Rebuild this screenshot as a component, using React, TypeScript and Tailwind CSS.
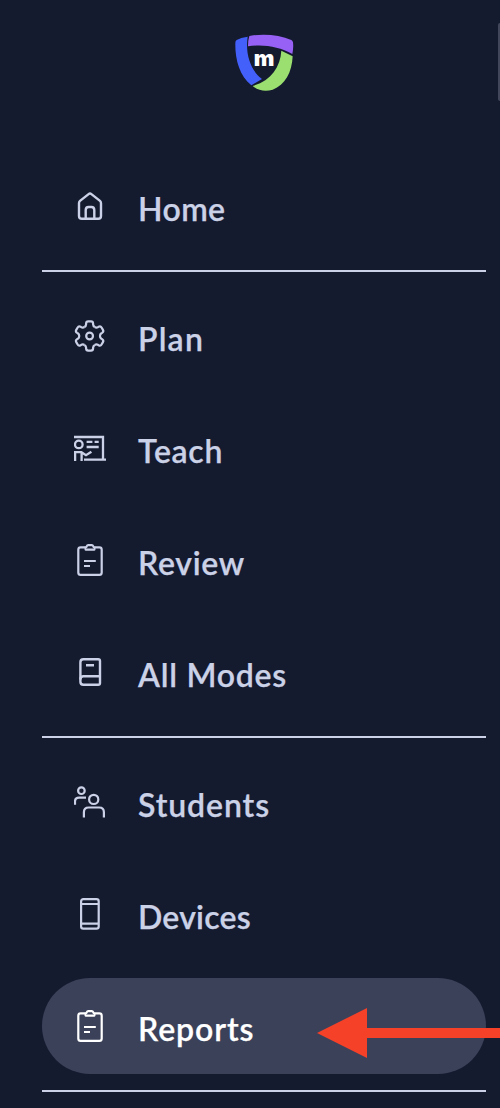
import React from 'react';
import clsx from 'clsx';

interface NavItem {
  label: string;
  icon: React.ReactNode;
  textClass?: string;
  active?: boolean;
}

function Icon({ children }: { children: React.ReactNode }) {
  return (
    <svg
      viewBox="0 0 32 32"
      className="w-8 h-8 shrink-0"
      fill="none"
      stroke="currentColor"
      strokeWidth="2.2"
      strokeLinejoin="round"
    >
      {children}
    </svg>
  );
}

function HomeIcon() {
  return (
    <Icon>
      <path d="M5 13.2Q5 11.8 6 10.9L14.6 4.1Q16 3 17.4 4.1L26 10.9Q27 11.8 27 13.2V25.9Q27 28.7 24.2 28.7H7.8Q5 28.7 5 25.9Z" strokeWidth="2.4" />
      <path d="M11.7 28.5V20.2Q11.7 17 14.6 17H17.4Q20.3 17 20.3 20.2V28.5" strokeWidth="2.4" />
    </Icon>
  );
}

const GEAR_TOOTH = 'M-5.2 -9Q-3.6 -9.8 -3.5 -11.6V-12.4Q-3.4 -14.6 -1.4 -14.6H1.4Q3.4 -14.6 3.5 -12.4V-11.6Q3.6 -9.8 5.2 -9';

function GearIcon() {
  return (
    <Icon>
      <g transform="translate(15.6 16)">
        {[0, 60, 120, 180, 240, 300].map((angle) => (
          <path key={angle} d={GEAR_TOOTH} transform={`rotate(${angle})`} />
        ))}
        <circle r="3.4" />
      </g>
    </Icon>
  );
}

function TeachIcon() {
  return (
    <Icon>
      <g strokeWidth="2.3" strokeLinejoin="miter">
        <path d="M0 5H29V27.6M10 27.6H32" />
        <circle cx="4.8" cy="12.4" r="3.8" />
        <path d="M12.6 9.8H18.4M20.6 9.8H24.7M12.6 15H24.7" />
        <path d="M1.1 29V20.2H7.4L12 23.2L17.4 19.8M7.6 29V21" />
      </g>
    </Icon>
  );
}

function ClipboardIcon() {
  return (
    <Icon>
      <path d="M11.5 3.4H6.6Q4.3 3.4 4.3 5.7V28.4Q4.3 30.8 6.6 30.8H25.4Q27.7 30.8 27.7 28.4V5.7Q27.7 3.4 25.4 3.4H20.5" />
      <path d="M11.6 5.6V3.4Q12.6 3.2 12.9 2Q13.2 1.1 14.2 1.1H17.8Q18.8 1.1 19.1 2Q19.4 3.2 20.4 3.4V5.6Z" />
      <path d="M10 17H21.8M10 22H16" />
    </Icon>
  );
}

function BookIcon() {
  return (
    <Icon>
      <path d="M9.4 3.3H24.2Q26 3.3 26 5.1V26.9Q26 28.7 24.2 28.7H9.4Q6.4 28.7 6.4 25.7V6.3Q6.4 3.3 9.4 3.3Z" strokeWidth="2.4" />
      <path d="M6.4 23.4Q6.4 20.2 9.4 20.2H26M12 9.2H20" strokeWidth="2.4" />
    </Icon>
  );
}

function StudentsIcon() {
  return (
    <Icon>
      <circle cx="7.4" cy="4.7" r="3.3" />
      <path d="M1 18.8V15.6Q1 11.6 5 11.6H12" />
      <circle cx="19.7" cy="13.4" r="4.6" />
      <path d="M9.9 31.6V26.2Q9.9 21.5 14.6 21.5H25.2Q29.9 21.5 29.9 26.2V31.6" />
    </Icon>
  );
}

function DeviceIcon() {
  return (
    <Icon>
      <rect x="7.1" y="1.2" width="17.6" height="29.4" rx="2.2" />
      <path d="M7.1 6H24.7M7.1 25.7H24.7" />
    </Icon>
  );
}

function Logo() {
  return (
    <svg viewBox="30 30 180 174" className="w-[60px] h-[58px]">
      <path fill="#9661f4" d="M80 35C122 28 168 33 202 48Q206 50 207 55Q209 72 205 90C165 68 120 60 72 67Q72 48 76 36Z" />
      <path fill="#4460fa" d="M71 38Q50 41 38 48Q34 50 34 57C33 105 46 155 82 184L114 165C80 140 63 90 71 38Z" />
      <path fill="#9bdf70" d="M172 80L206 97C204 145 183 184 146 197C124 204 103 200 86 186C140 170 169 130 172 80Z" />
      <text
        x="89"
        y="125"
        fill="#fff"
        fontSize="63"
        textLength="62"
        lengthAdjust="spacingAndGlyphs"
        className="font-[Inter,sans-serif] font-black"
      >
        m
      </text>
    </svg>
  );
}

const navGroups: NavItem[][] = [
  [{ label: 'Home', icon: <HomeIcon />, textClass: 'tracking-[0.4px]' }],
  [
    { label: 'Plan', icon: <GearIcon />, textClass: 'tracking-[1.2px]' },
    { label: 'Teach', icon: <TeachIcon />, textClass: 'tracking-[0.7px]' },
    { label: 'Review', icon: <ClipboardIcon />, textClass: 'tracking-[0.7px]' },
    { label: 'All Modes', icon: <BookIcon />, textClass: 'tracking-[0.75px]' },
  ],
  [
    { label: 'Students', icon: <StudentsIcon />, textClass: 'tracking-[0.9px]' },
    { label: 'Devices', icon: <DeviceIcon />, textClass: 'tracking-[0.2px]' },
    { label: 'Reports', icon: <ClipboardIcon />, textClass: 'tracking-[0.9px]', active: true },
  ],
];

function NavLink({ item }: { item: NavItem }) {
  return (
    <a
      href="#"
      className={clsx(
        'flex items-center h-24 pl-8 gap-8 rounded-full',
        item.active ? 'bg-[#3a4159] text-white' : 'text-[#cbd2e8]'
      )}
    >
      {item.icon}
      <span
        className={clsx(
          'pt-1.5 text-[32px] leading-10 font-semibold whitespace-nowrap [-webkit-text-stroke:0.25px_currentColor]',
          item.textClass
        )}
      >
        {item.label}
      </span>
    </a>
  );
}

export default function App() {
  return (
    <div className="relative w-[500px] h-[1108px] overflow-hidden bg-[#151b2f] font-[Lato,sans-serif]">
      <header className="flex pt-[34px] pl-[234px] h-[158px]">
        <Logo />
      </header>

      <nav className="flex flex-col gap-4 ml-[42px] mr-3.5">
        {navGroups.map((group, index) => (
          <React.Fragment key={index}>
            {group.map((item) => (
              <NavLink key={item.label} item={item} />
            ))}
            <div className="h-0.5 bg-[#cbd2e8]" />
          </React.Fragment>
        ))}
      </nav>

      {/* Scrollbar thumb */}
      <div className="absolute top-[23px] right-0 w-0.5 h-[78px] rounded-l-full bg-[#42465a]" />

      {/* Arrow pointing at the active item */}
      <svg viewBox="0 0 183 50" className="absolute left-[317px] top-[1008px] w-[183px] h-[50px]" fill="#f54128">
        <path d="M0 25L50 0V20H183V30H50V50Z" />
      </svg>
    </div>
  );
}
